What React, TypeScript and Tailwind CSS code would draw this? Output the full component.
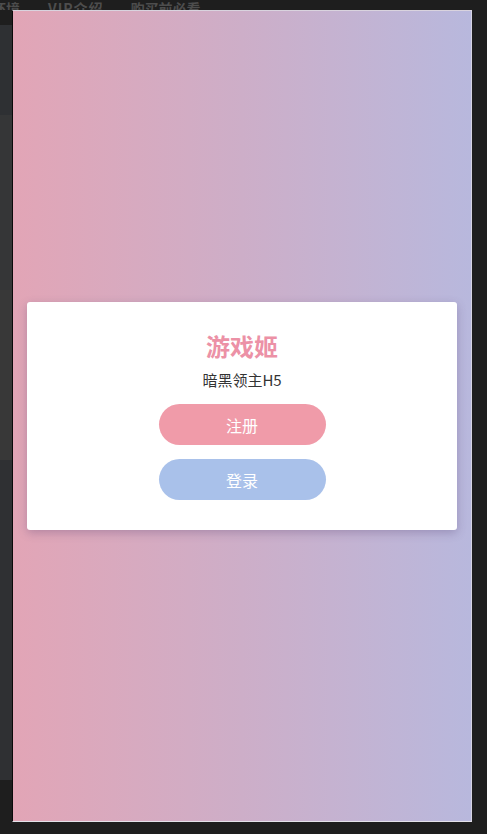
import React from 'react';

const font = { fontFamily: '"Noto Sans CJK SC", "Noto Sans", sans-serif' };

export default function App() {
  return (
    <div className="relative h-[834px] w-[487px] overflow-hidden bg-[#1e1e1e]" style={font}>
      {/* page behind the overlay */}
      <div className="flex h-[10px] items-end overflow-hidden whitespace-nowrap text-[14px] font-bold leading-[20px] text-[#4d4d4d]">
        <div className="-mb-[8px] -ml-[8px] flex">
          <span>环境</span>
          <span className="ml-[28px] tracking-[1px]">VIP介绍</span>
          <span className="ml-[27px]">购买前必看</span>
        </div>
      </div>
      <div className="flex w-[12px] flex-col">
        <div className="h-[15px] bg-[#1e1e1e]" />
        <div className="h-[90px] bg-[#2e3033]" />
        <div className="h-[175px] bg-[#353637]" />
        <div className="h-[170px] bg-[#383838]" />
        <div className="h-[320px] bg-[#2f3033]" />
      </div>

      {/* overlay panel */}
      <div className="absolute left-[12px] top-[10px] flex h-[812px] w-[460px] items-center justify-center border border-l-[#0a0a0a] border-t-[#d9d3de] border-r-[#d6d4e2] border-b-[#e4e2ea] bg-gradient-to-r from-[#e2a5b6] via-[#cdaec8] to-[#b8b8dd] px-[14px]">
        <div className="flex w-full flex-col items-center rounded-[3px] bg-white pb-[30px] pt-[28px] shadow-[0_3px_10px_rgba(80,60,110,0.3)]">
          <h1 className="text-[24px] font-bold leading-[32px] text-[#ec91a6]">游戏姬</h1>
          <p className="mt-[8px] text-[15px] leading-[20px] text-[#333]">暗黑领主H5</p>
          <button className="mt-[14px] h-[41px] w-[167px] rounded-full bg-[#f09ba9] text-[16px] text-white">
            注册
          </button>
          <button className="mt-[14px] h-[41px] w-[167px] rounded-full bg-[#a9c1ea] text-[16px] text-white">
            登录
          </button>
        </div>
      </div>
    </div>
  );
}
